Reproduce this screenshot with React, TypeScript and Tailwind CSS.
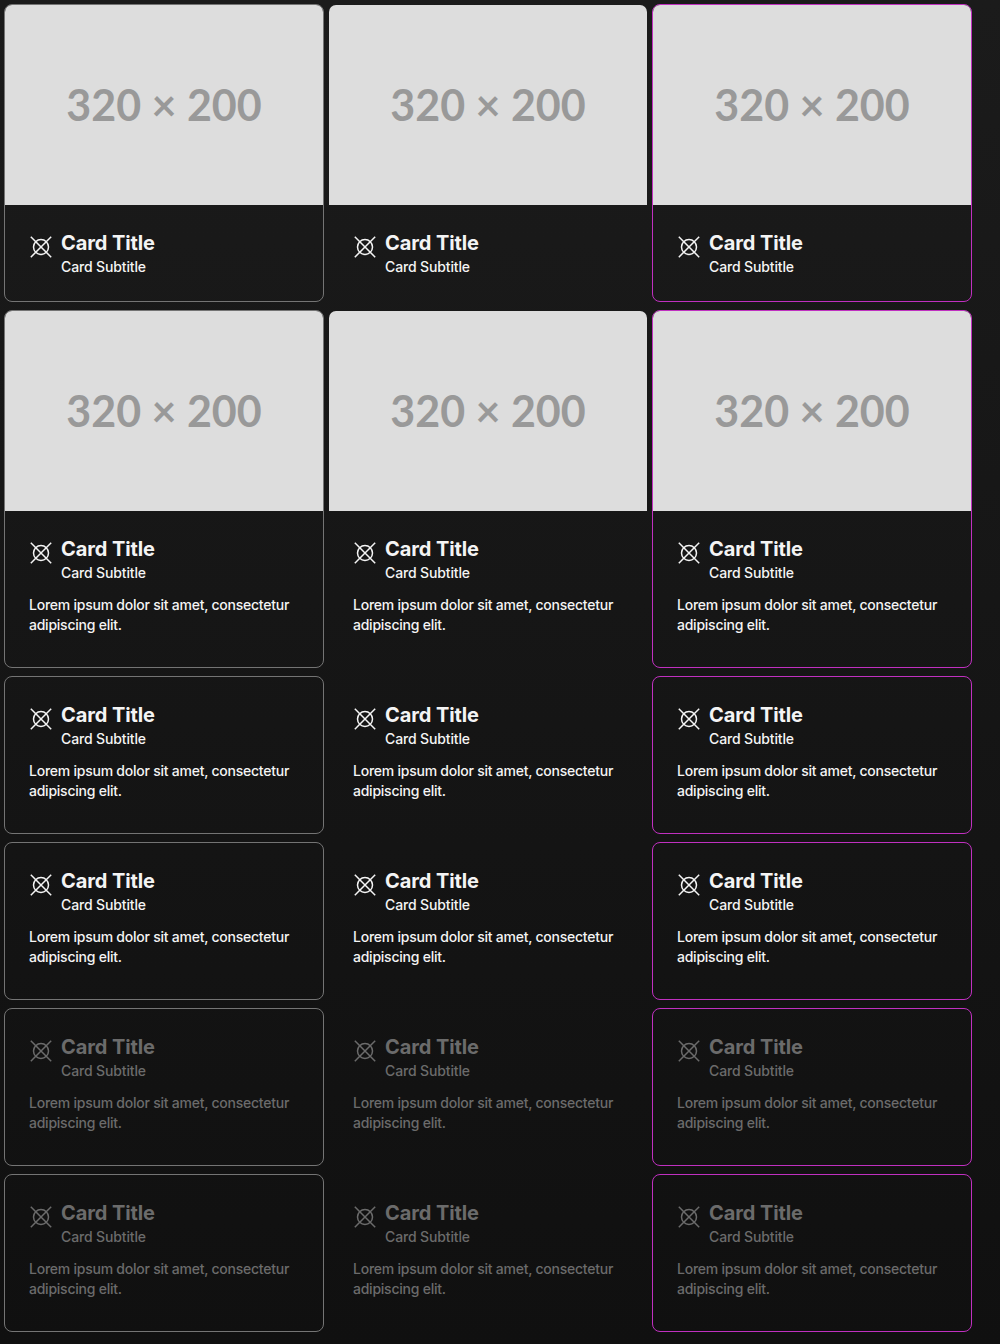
type Variant = "outlined" | "plain" | "accent";

const borders: Record<Variant, string> = {
  outlined: "border-[#747474]",
  plain: "border-transparent",
  accent: "border-[#c030c0]",
};

const variants: Variant[] = ["outlined", "plain", "accent"];

const rows = [
  { media: true, body: false, disabled: false },
  { media: true, body: true, disabled: false },
  { media: false, body: true, disabled: false },
  { media: false, body: true, disabled: false },
  { media: false, body: true, disabled: true },
  { media: false, body: true, disabled: true },
];

function TargetIcon() {
  return (
    <svg viewBox="0 0 24 24" className="mt-1.5 size-6 shrink-0" fill="none" stroke="currentColor" strokeWidth="1.5">
      <circle cx="12" cy="12" r="7.5" />
      <path d="M1.8 1.8 22.2 22.2M22.2 1.8 1.8 22.2" />
    </svg>
  );
}

function Card({ variant, media, body, disabled }: { variant: Variant; media: boolean; body: boolean; disabled: boolean }) {
  return (
    <article className={`w-[320px] overflow-hidden rounded-lg border ${borders[variant]}`}>
      {media && (
        <div className="flex h-[200px] items-center justify-center bg-[#dddddd] font-['Lato',sans-serif] text-[43px] font-bold text-[#999999]">
          320 × 200
        </div>
      )}
      <div className={`p-6 ${disabled ? "text-[#6b6b6b]" : "text-[#f4f4f4]"}`}>
        <header className="flex gap-2">
          <TargetIcon />
          <div>
            <h2 className="text-xl leading-7 font-bold tracking-[-0.1px]">Card Title</h2>
            <p className="text-sm leading-5 font-medium tracking-[-0.14px]">Card Subtitle</p>
          </div>
        </header>
        {body && (
          <p className="mt-3 mb-2 text-sm leading-5 font-medium tracking-[-0.24px]">
            Lorem ipsum dolor sit amet, consectetur adipiscing elit.
          </p>
        )}
      </div>
    </article>
  );
}

export default function App() {
  return (
    <main className="h-[1344px] w-[1000px] overflow-hidden bg-linear-to-b from-[#1b1b1b] to-[#101010] p-1 font-['Inter',sans-serif]">
      <div className="flex flex-col gap-2">
        {rows.map((row, i) => (
          <div key={i} className="flex gap-1">
            {variants.map((v) => (
              <Card key={v} variant={v} {...row} />
            ))}
          </div>
        ))}
      </div>
    </main>
  );
}
